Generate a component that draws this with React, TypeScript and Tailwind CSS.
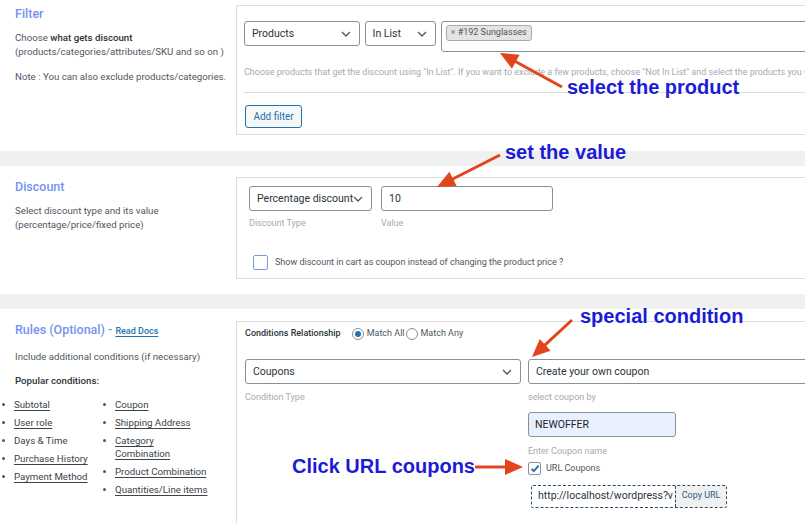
import React from 'react';

const Chevron: React.FC = () => (
  <svg width="10" height="6" viewBox="0 0 10 6" className="shrink-0">
    <path d="M1 1l4 4 4-4" fill="none" stroke="#50575e" strokeWidth="1.3" />
  </svg>
);

const Select: React.FC<{ label: string; className?: string }> = ({ label, className = '' }) => (
  <div
    className={`h-[25px] border border-[#8c8f94] rounded-[3px] bg-white pl-[7px] pr-[8px] flex items-center justify-between text-[10.5px] text-[#2c3338] ${className}`}
  >
    <span className="whitespace-nowrap">{label}</span>
    <Chevron />
  </div>
);

const Bullet: React.FC<{ children: React.ReactNode; link?: boolean }> = ({ children, link = true }) => (
  <div className="flex">
    <span className="w-[12px] shrink-0 h-[13px] flex items-center">
      <span className="w-[3px] h-[3px] rounded-full bg-[#50575e]" />
    </span>
    <span className={`text-[9.7px] leading-[13px] text-[#3c434a] ${link ? 'underline underline-offset-2' : ''}`}>{children}</span>
  </div>
);

// arrow from (x1,y1) to the tip at (x2,y2)
function Arrow({ x1, y1, x2, y2 }: { x1: number; y1: number; x2: number; y2: number }) {
  const dx = x2 - x1;
  const dy = y2 - y1;
  const len = Math.sqrt(dx * dx + dy * dy);
  const ux = dx / len;
  const uy = dy / len;
  const hl = 18;
  const hw = 8;
  const bx = x2 - ux * hl;
  const by = y2 - uy * hl;
  const p = `${x2},${y2} ${bx - uy * hw},${by + ux * hw} ${bx + uy * hw},${by - ux * hw}`;
  return (
    <g>
      <line x1={x1} y1={y1} x2={bx + ux * 2} y2={by + uy * 2} stroke="#e2451c" strokeWidth="3" />
      <polygon points={p} fill="#e2451c" />
    </g>
  );
}

const Note: React.FC<{ left: number; top: number; children: React.ReactNode }> = ({ left, top, children }) => (
  <div
    className="absolute whitespace-nowrap text-[20px] leading-[20px] font-bold text-[#1c1cd6] font-['Liberation_Sans',Arial,sans-serif]"
    style={{ left, top }}
  >
    {children}
  </div>
);

export default function App() {
  return (
    <div className="relative w-[805px] h-[523px] overflow-hidden bg-[#f0f0f0] flex flex-col font-['Roboto','Liberation_Sans',sans-serif]">
      {/* Filter */}
      <div className="bg-white h-[151px] flex shrink-0">
        <div className="w-[236px] shrink-0 pl-[15px] pt-[5px] whitespace-nowrap">
          <h2 className="text-[12.5px] leading-[18px] font-medium text-[#7493ef]">Filter</h2>
          <p className="mt-[8px] text-[9.7px] leading-[14px] text-[#50575e]">
            Choose <span className="font-medium text-[#2c3338]">what gets discount</span>
            <br />
            (products/categories/attributes/SKU and so on )
          </p>
          <p className="mt-[11px] text-[9.7px] leading-[14px] text-[#50575e]">
            Note : You can also exclude products/categories.
          </p>
        </div>
        <div className="mt-[5px] h-[130px] w-[620px] shrink-0 border border-[#dcdcde] pl-[7px] pt-[15px]">
          <div className="flex items-start">
            <Select label="Products" className="w-[117px]" />
            <Select label="In List" className="w-[72px] ml-[5px]" />
            <div className="ml-[5px] w-[420px] h-[31px] border border-[#8c8f94] rounded-[3px] pl-[4px] pt-[3px] flex items-start">
              <span className="flex items-center h-[16px] px-[4px] bg-[#e4e4e4] border border-[#aaa] rounded-[3px] text-[9px] text-[#50575e] whitespace-nowrap">
                <span className="mr-[2px] text-[#777]">×</span>#192 Sunglasses
              </span>
            </div>
          </div>
          <p className="mt-[13px] text-[9px] leading-[14px] text-[#a7aaad] whitespace-nowrap">
            Choose products that get the discount using "In List". If you want to exclude a few products, choose "Not In List" and select the products you want to exclude from discount.
          </p>
          <div className="mt-[13px] border-t border-[#dcdcde]" />
          <button className="mt-[12px] ml-[1px] w-[57px] h-[23px] border border-[#2271b1] rounded-[3px] bg-[#f6f7f7] text-[10px] text-[#2271b1]">
            Add filter
          </button>
        </div>
      </div>

      <div className="h-[15px] shrink-0" />

      {/* Discount */}
      <div className="bg-white h-[128px] flex shrink-0">
        <div className="w-[236px] shrink-0 pl-[15px] pt-[12px] whitespace-nowrap">
          <h2 className="text-[12.5px] leading-[18px] font-medium text-[#7493ef]">Discount</h2>
          <p className="mt-[8px] text-[9.7px] leading-[14px] text-[#50575e]">
            Select discount type and its value
            <br />
            (percentage/price/fixed price)
          </p>
        </div>
        <div className="mt-[11px] h-[102px] w-[620px] shrink-0 border border-[#dcdcde] pl-[12px] pt-[8px]">
          <div className="flex">
            <div>
              <Select label="Percentage discount" className="w-[123px]" />
              <p className="mt-[6px] text-[9px] leading-[12px] text-[#a7aaad]">Discount Type</p>
            </div>
            <div className="ml-[9px]">
              <div className="w-[172px] h-[25px] border border-[#8c8f94] rounded-[3px] pl-[7px] flex items-center text-[10.5px] text-[#2c3338]">
                10
              </div>
              <p className="mt-[6px] text-[9px] leading-[12px] text-[#a7aaad]">Value</p>
            </div>
          </div>
          <div className="mt-[26px] ml-[4px] flex items-center">
            <span className="w-[15px] h-[15px] border border-[#7b9ae6] rounded-[2px] bg-white" />
            <span className="ml-[7px] text-[9px] text-[#50575e]">
              Show discount in cart as coupon instead of changing the product price ?
            </span>
          </div>
        </div>
      </div>

      <div className="h-[15px] shrink-0" />

      {/* Rules */}
      <div className="bg-white flex-1 flex">
        <div className="w-[236px] shrink-0 pt-[12px] whitespace-nowrap">
          <h2 className="pl-[15px] text-[12.5px] leading-[18px] font-medium text-[#7493ef]">
            Rules (Optional) -{' '}
            <span className="text-[9px] font-medium text-[#2271b1] underline underline-offset-2">Read Docs</span>
          </h2>
          <p className="pl-[15px] mt-[10px] text-[9.7px] leading-[14px] text-[#50575e]">
            Include additional conditions (if necessary)
          </p>
          <p className="pl-[15px] mt-[10px] text-[9.7px] leading-[14px] font-medium text-[#2c3338]">Popular conditions:</p>
          <div className="mt-[10px] pl-[2px] flex">
            <div className="w-[101px] flex flex-col gap-[5px]">
              <Bullet>Subtotal</Bullet>
              <Bullet>User role</Bullet>
              <Bullet link={false}>Days &amp; Time</Bullet>
              <Bullet>Purchase History</Bullet>
              <Bullet>Payment Method</Bullet>
            </div>
            <div className="w-[110px] flex flex-col gap-[5px]">
              <Bullet>Coupon</Bullet>
              <Bullet>Shipping Address</Bullet>
              <Bullet>
                Category
                <br />
                Combination
              </Bullet>
              <Bullet>Product Combination</Bullet>
              <Bullet>Quantities/Line items</Bullet>
            </div>
          </div>
        </div>
        <div className="mt-[12px] w-[620px] shrink-0 border-l border-t border-[#dcdcde] pl-[8px] pt-[5px]">
          <div className="flex items-center h-[14px] text-[9px] whitespace-nowrap">
            <span className="font-medium text-[#2c3338]">Conditions Relationship</span>
            <span className="ml-[11px] w-[12px] h-[12px] rounded-full border border-[#8c8f94] flex items-center justify-center">
              <span className="w-[6px] h-[6px] rounded-full bg-[#2271b1]" />
            </span>
            <span className="ml-[3px] text-[#50575e]">Match All</span>
            <span className="ml-[1px] w-[12px] h-[12px] rounded-full border border-[#8c8f94]" />
            <span className="ml-[3px] text-[#50575e]">Match Any</span>
          </div>
          <div className="mt-[18px] flex">
            <div>
              <Select label="Coupons" className="w-[276px]" />
              <p className="mt-[7px] text-[9px] leading-[12px] text-[#a7aaad]">Condition Type</p>
            </div>
            <div className="ml-[7px]">
              <div className="w-[300px] h-[25px] border border-[#8c8f94] rounded-[3px] pl-[7px] flex items-center text-[10.5px] text-[#2c3338]">
                Create your own coupon
              </div>
              <p className="mt-[7px] text-[9px] leading-[12px] text-[#a7aaad]">select coupon by</p>
              <div className="mt-[9px] w-[148px] h-[25px] border border-[#8c8f94] rounded-[3px] bg-[#e8f0fe] pl-[6px] flex items-center text-[10.5px] text-[#1d2327]">
                NEWOFFER
              </div>
              <p className="mt-[8px] text-[9px] leading-[12px] text-[#a7aaad]">Enter Coupon name</p>
              <div className="mt-[5px] flex items-center">
                <span className="w-[13px] h-[13px] border border-[#8c8f94] rounded-[2px] bg-white flex items-center justify-center">
                  <svg width="10" height="9" viewBox="0 0 10 9">
                    <path d="M1.5 4.8l2.3 2.4L8.6 1.6" fill="none" stroke="#2271b1" strokeWidth="1.8" />
                  </svg>
                </span>
                <span className="ml-[5px] text-[9px] text-[#50575e]">URL Coupons</span>
              </div>
              <div className="mt-[9px] ml-[3px] w-[196px] h-[23px] border border-dashed border-[#2c4a6e] rounded-[2px] flex">
                <div className="w-[143px] shrink-0 overflow-hidden whitespace-nowrap pl-[6px] flex items-center text-[10.5px] text-[#2c3338]">
                  http://localhost/wordpress?v
                </div>
                <div className="flex-1 border-l border-dashed border-[#2c4a6e] bg-[#f0f0f1] flex items-center justify-center text-[9px] text-[#2c5c8a]">
                  Copy URL
                </div>
              </div>
            </div>
          </div>
        </div>
      </div>

      {/* annotations */}
      <svg className="absolute inset-0 pointer-events-none" width="805" height="523">
        <Arrow x1={562} y1={87} x2={500} y2={53} />
        <Arrow x1={500} y1={155} x2={437} y2={187} />
        <Arrow x1={572} y1={320} x2={532} y2={357} />
        <Arrow x1={475} y1={467} x2={523} y2={467} />
      </svg>
      <Note left={567} top={77}>select the product</Note>
      <Note left={505} top={142}>set the value</Note>
      <Note left={580} top={306}>special condition</Note>
      <Note left={292} top={456}>Click URL coupons</Note>
    </div>
  );
}
